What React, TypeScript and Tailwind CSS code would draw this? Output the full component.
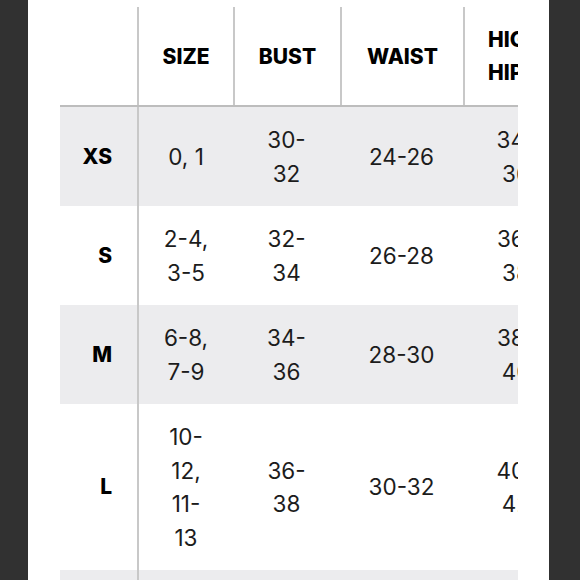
const HEADERS = ["SIZE", "BUST", "WAIST", "HIGH HIP"];

const ROWS = [
  { label: "XS", cells: [["0, 1"], ["30-", "32"], ["24-26"], ["34-", "36"]] },
  { label: "S", cells: [["2-4,", "3-5"], ["32-", "34"], ["26-28"], ["36-", "38"]] },
  { label: "M", cells: [["6-8,", "7-9"], ["34-", "36"], ["28-30"], ["38-", "40"]] },
  { label: "L", cells: [["10-", "12,", "11-", "13"], ["36-", "38"], ["30-32"], ["40-", "42"]] },
  { label: "XL", cells: [["14-", "16,", "15-", "17"], ["38-", "40"], ["32-34"], ["42-", "44"]] },
];

const GRID = "grid grid-cols-[77px_96px_107px_123px_106px] w-[504px]";

export default function App() {
  return (
    <div
      className="w-[580px] h-[580px] bg-[#313131] overflow-hidden"
      style={{ fontFamily: "Inter, 'Noto Sans', sans-serif" }}
    >
      <div className="ml-[28px] w-[521px] h-full bg-white pl-[32px] pt-[7px]">
        <div className="w-[458px] overflow-hidden">
          {/* header */}
          <div className={`${GRID} h-[100px] border-b-2 border-[#bdbdbd]`}>
            <div />
            {HEADERS.map((h, i) => (
              <div
                key={h}
                className={`border-l-2 border-[#c8c8c8] flex items-center text-[21px] font-extrabold text-black leading-[33px] ${
                  i === 3 ? "justify-start pl-[23px] w-[90px]" : "justify-center text-center"
                }`}
              >
                {h}
              </div>
            ))}
          </div>

          {/* body */}
          {ROWS.map((r, ri) => (
            <div
              key={r.label}
              className={`${GRID} ${ri % 2 === 0 ? "bg-[#ececee]" : "bg-white"}`}
            >
              <div className="flex items-center justify-end pr-[25px] text-[21px] font-extrabold text-black">
                {r.label}
              </div>
              {r.cells.map((lines, ci) => (
                <div
                  key={ci}
                  className={`flex flex-col items-center justify-center py-4 text-[22.5px] leading-[33.5px] text-[#1c1c1c] ${
                    ci === 0 ? "border-l-2 border-[#c8c8c8]" : ""
                  }`}
                >
                  {lines.map((l, li) => (
                    <span key={li}>{l}</span>
                  ))}
                </div>
              ))}
            </div>
          ))}
        </div>
      </div>
    </div>
  );
}
